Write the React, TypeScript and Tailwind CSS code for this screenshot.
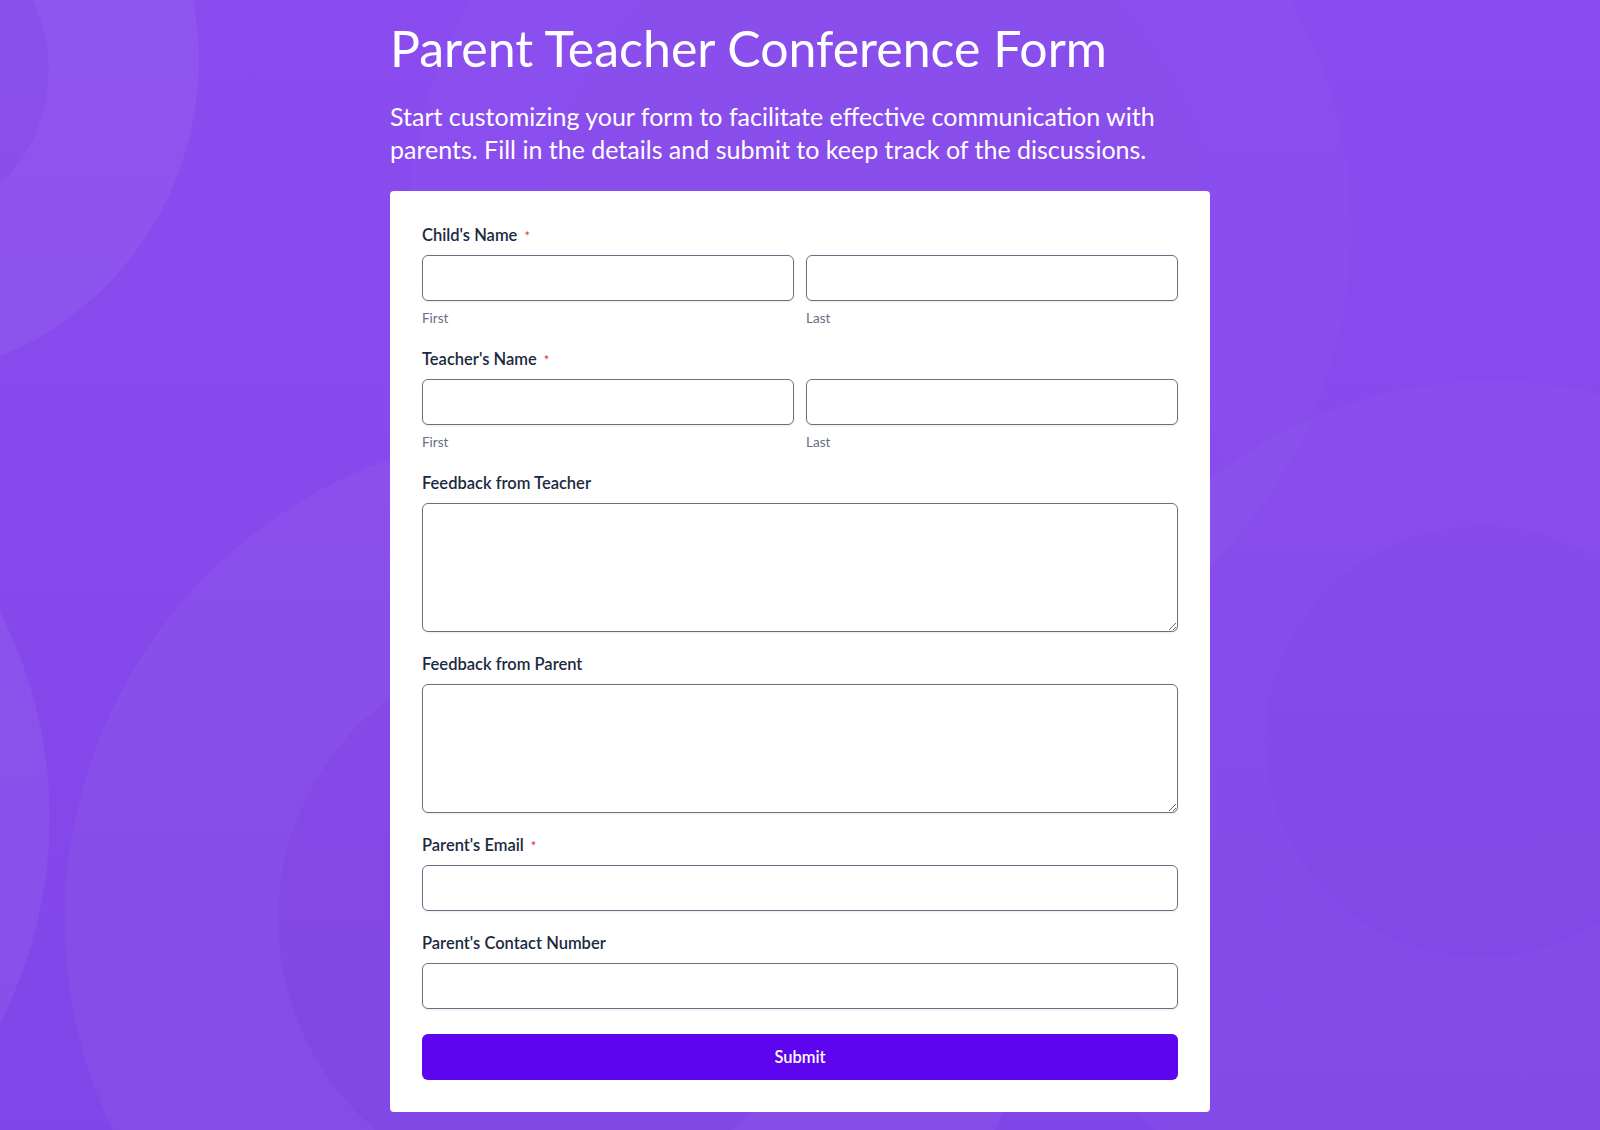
import React from "react";

function Background() {
  return (
    <svg
      className="absolute inset-0 w-full h-full pointer-events-none"
      viewBox="0 0 1600 1130"
      preserveAspectRatio="xMidYMid slice"
      aria-hidden="true"
    >
      <defs>
        <linearGradient id="bgGrad" x1="0" y1="0" x2="0" y2="1">
          <stop offset="0" stopColor="#8a4cef" />
          <stop offset="1" stopColor="#8146e8" />
        </linearGradient>
      </defs>
      <rect x="0" y="0" width="1600" height="1130" fill="url(#bgGrad)" />
      {/* top middle faint ring */}
      <circle cx="880" cy="230" r="470" fill="#ffffff" fillOpacity="0.018" />
      <circle cx="880" cy="230" r="330" fill="#000000" fillOpacity="0.012" />
      {/* top-left */}
      <circle cx="-120" cy="60" r="320" fill="#ffffff" fillOpacity="0.05" />
      <circle cx="-110" cy="70" r="160" fill="#5a1fc8" fillOpacity="0.09" />
      {/* left middle */}
      <circle cx="-400" cy="816" r="451" fill="#ffffff" fillOpacity="0.05" />
      {/* bottom big ring */}
      <circle cx="554" cy="918" r="488" fill="#ffffff" fillOpacity="0.035" />
      <circle cx="554" cy="918" r="275" fill="#5a1fc8" fillOpacity="0.08" />
      {/* right ring */}
      <circle cx="1490" cy="830" r="450" fill="#ffffff" fillOpacity="0.025" />
      <circle cx="1480" cy="740" r="215" fill="#5a1fc8" fillOpacity="0.05" />
    </svg>
  );
}

function Label({ text, required }: { text: string; required?: boolean }) {
  return (
    <div className="flex items-center h-6 mb-2 text-[16.5px] leading-6 font-semibold text-[#1c2a40]">
      <span>{text}</span>
      {required && (
        <span className="ml-[7px] mt-[3px] text-[13px] leading-none text-[#d8342a] font-normal">*</span>
      )}
    </div>
  );
}

const inputCls =
  "block w-full h-[46px] rounded-[6px] border border-[#687083] bg-white shadow-[0_1px_2px_rgba(0,0,0,0.08)] outline-none px-3 text-[16px]";

function NameField({ label }: { label: string }) {
  return (
    <div>
      <Label text={label} required />
      <div className="grid grid-cols-2 gap-3">
        <div>
          <input className={inputCls} type="text" />
          <div className="mt-2 text-[13.5px] leading-[18px] text-[#687083]">First</div>
        </div>
        <div>
          <input className={inputCls} type="text" />
          <div className="mt-2 text-[13.5px] leading-[18px] text-[#687083]">Last</div>
        </div>
      </div>
    </div>
  );
}

export default function App() {
  return (
    <div
      className="relative min-h-screen w-full overflow-hidden"
      style={{ fontFamily: "Lato, 'Noto Sans', sans-serif" }}
    >
      <Background />
      <div className="relative mx-auto w-[820px] pt-[18px] pb-5">
        <h1 className="text-[50px] leading-[1.2] font-normal text-white">
          Parent Teacher Conference Form
        </h1>
        <p className="mt-[22px] text-[25px] leading-[33px] text-white w-[790px]">
          Start customizing your form to facilitate effective communication with parents. Fill in
          the details and submit to keep track of the discussions.
        </p>
        <div className="mt-[25px] bg-white rounded-[4px] px-8 pt-8 pb-8">
          <div className="flex flex-col gap-5">
            <NameField label="Child's Name" />
            <NameField label="Teacher's Name" />
            <div>
              <Label text="Feedback from Teacher" />
              <textarea className="block w-full h-[129px] rounded-[6px] border border-[#687083] bg-white shadow-[0_1px_2px_rgba(0,0,0,0.08)] outline-none p-3 text-[16px]" />
            </div>
            <div>
              <Label text="Feedback from Parent" />
              <textarea className="block w-full h-[129px] rounded-[6px] border border-[#687083] bg-white shadow-[0_1px_2px_rgba(0,0,0,0.08)] outline-none p-3 text-[16px]" />
            </div>
            <div>
              <Label text="Parent's Email" required />
              <input className={inputCls} type="email" />
            </div>
            <div>
              <Label text="Parent's Contact Number" />
              <input className={inputCls} type="tel" />
            </div>
          </div>
          <button
            type="button"
            className="mt-[25px] block w-full h-[46px] rounded-[6px] bg-[#5d05ee] text-white text-[16.5px] font-semibold"
          >
            Submit
          </button>
        </div>
      </div>
    </div>
  );
}
